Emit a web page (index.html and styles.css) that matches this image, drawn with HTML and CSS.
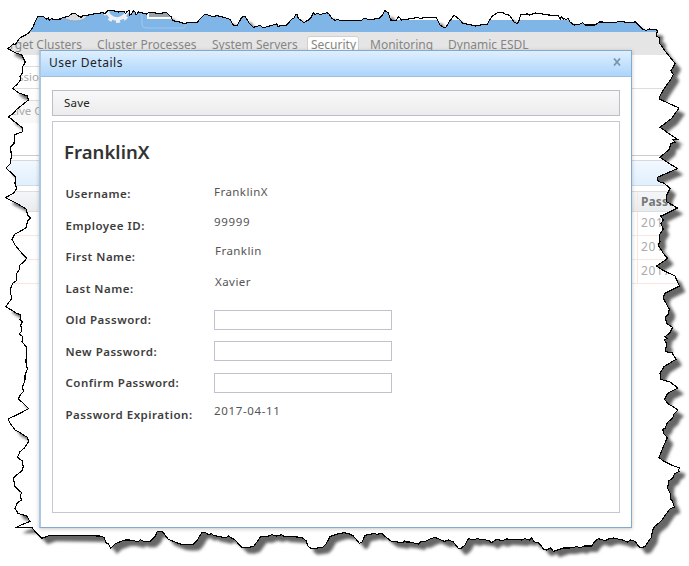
FILE: index.html
```html
<!DOCTYPE html>
<html lang="en">
<head>
<meta charset="utf-8">
<title>User Details</title>
<link rel="stylesheet" href="styles.css">
</head>
<body>
<div class="stage">
  <svg class="layer" viewBox="0 0 689 566">
    <defs>
      <path id="edge" transform="scale(.333333)" d="M24 146L40 132L46 134L58 115L85 100L97 85L108 60L113 50L130 50L140 57L145 54L148 61L154 56L160 58L182 57L188 52L205 50L214 42L225 40L232 46L243 52L250 46L262 46L275 43L308 38L314 41L322 33L340 32L355 36L372 34L377 41L381 34L387 32L389 46L394 42L400 33L404 34L408 45L416 36L440 42L446 37L476 40L500 38L515 52L517 62L535 65L550 70L592 66L612 45L620 44L640 50L650 47L665 50L690 58L700 75L712 76L725 52L735 49L748 70L760 82L780 76L787 82L795 82L830 72L834 79L846 76L860 75L875 58L882 54L887 44L892 45L895 55L912 68L925 60L934 51L940 38L944 43L955 40L959 44L982 38L988 43L995 55L1005 61L1012 58L1020 61L1085 61L1092 54L1110 60L1138 54L1146 46L1155 32L1165 38L1172 60L1188 61L1196 50L1205 60L1225 57L1255 52L1260 56L1275 52L1310 54L1320 75L1330 82L1338 81L1350 62L1362 46L1377 57L1389 70L1410 74L1427 78L1446 74L1462 72L1475 50L1492 38L1509 38L1515 42L1529 46L1542 66L1550 70L1555 68L1562 45L1577 44L1580 41L1589 45L1605 39L1625 41L1633 44L1660 46L1675 48L1681 57L1684 50L1690 58L1692 54L1697 58L1705 56L1710 66L1722 75L1737 74L1747 68L1757 75L1785 75L1799 66L1850 67L1857 63L1878 67L1907 66L1929 88L1939 91L1947 87L1967 88L1972 93L1969 108L1979 114L1979 130L1987 141L1997 155L2025 190L2018 205L2012 212L2020 224L2014 235L1989 272L1979 290L1980 298L2037 324L2030 334L2015 355L1980 382L2032 418L2018 418L2025 428L2012 430L2008 448L1980 472L2032 506L1972 532L1975 545L1990 548L2010 565L1999 588L2000 605L2032 624L1990 645L1982 648L1990 660L1983 671L1990 687L1978 705L1980 725L1974 735L1990 760L2003 775L1985 788L1969 798L1987 810L2025 828L2038 858L1994 880L1990 895L2008 928L2005 942L1996 952L2000 970L2018 982L2010 998L1995 1010L2001 1015L1993 1021L2000 1030L1996 1055L2016 1058L2028 1078L1992 1100L1980 1120L1982 1138L2010 1146L2034 1164L2003 1180L1994 1198L2003 1210L2034 1230L2022 1242L2018 1254L2002 1268L1996 1284L1988 1288L1992 1302L2002 1313L1990 1340L1977 1372L1988 1382L2012 1394L2028 1400L2040 1404L2034 1410L2037 1414L2024 1421L2018 1435L2006 1442L2003 1465L2011 1480L2011 1495L2018 1505L2023 1521L2008 1528L1985 1562L1963 1580L1958 1590L1954 1612L1935 1640L1920 1644L1905 1624L1892 1620L1883 1626L1864 1619L1840 1614L1826 1617L1815 1622L1795 1616L1785 1624L1775 1638L1752 1638L1743 1643L1730 1640L1710 1644L1690 1644L1672 1650L1660 1654L1652 1644L1639 1650L1630 1647L1618 1630L1602 1625L1595 1614L1588 1620L1575 1616L1565 1620L1520 1617L1506 1622L1490 1618L1475 1628L1465 1621L1430 1616L1425 1620L1405 1616L1395 1635L1382 1646L1375 1645L1360 1626L1346 1620L1333 1624L1305 1612L1292 1616L1272 1626L1264 1624L1255 1632L1230 1626L1218 1626L1214 1622L1208 1628L1175 1624L1162 1615L1145 1600L1130 1603L1124 1600L1095 1606L1086 1626L1078 1630L1070 1620L1060 1608L1045 1600L1038 1602L1035 1598L1020 1600L1000 1606L990 1610L978 1632L968 1642L935 1646L925 1640L918 1622L905 1612L850 1608L845 1604L830 1608L815 1604L800 1610L782 1610L762 1638L745 1643L725 1642L705 1620L685 1608L678 1614L640 1606L635 1601L625 1604L615 1597L605 1598L590 1623L580 1633L560 1634L540 1632L505 1618L488 1596L472 1594L465 1610L450 1624L430 1624L422 1619L414 1625L390 1620L375 1620L348 1630L332 1644L325 1631L319 1630L312 1612L300 1608L150 1606L125 1615L105 1594L95 1582L50 1582L60 1576L90 1564L80 1548L54 1540L45 1525L52 1508L65 1500L60 1488L65 1478L58 1472L45 1460L40 1435L50 1425L66 1412L70 1400L66 1382L52 1372L60 1355L72 1345L86 1325L82 1312L60 1298L45 1290L28 1266L25 1256L48 1246L86 1226L65 1205L55 1198L60 1186L70 1175L68 1160L75 1140L75 1125L82 1108L78 1088L79 1040L66 1026L68 1010L58 1002L66 993L62 975L67 965L60 958L62 945L50 940L18 920L35 895L30 870L38 850L50 842L50 820L58 808L60 795L72 785L80 775L66 760L45 735L36 718L45 702L68 690L80 682L82 662L92 655L82 645L80 628L54 612L22 596L18 592L40 580L50 566L45 550L46 530L35 520L18 504L30 492L34 470L32 440L42 430L44 405L50 402L68 395L66 382L50 370L25 350L40 340L50 328L85 300L82 288L55 278L38 265L50 254L62 240L60 230L68 218L68 200L76 186L65 165L45 158Z"/>
      <clipPath id="paper"><use href="#edge"/></clipPath>
      <filter id="soft" x="-5%" y="-5%" width="110%" height="110%"><feGaussianBlur stdDeviation="1.5"/></filter>
    </defs>
    <use href="#edge" x="6" y="6" class="paper-shadow"/>
    <use href="#edge" class="paper-fill"/>
  </svg>

  <div class="page">
    <div class="banner">
      <svg class="banner-icons" width="160" height="32" viewBox="50 0 160 32">
        <ellipse cx="75" cy="15.500" rx="12" ry="5.500" fill="#d5dce3" stroke="#88a5bf"/>
        <circle cx="117" cy="9" r="10" fill="none" stroke="#eef1f4" stroke-width="3.500"/>
        <circle cx="117" cy="9" r="12.500" fill="none" stroke="#eef1f4" stroke-width="3" stroke-dasharray="4 4.200"/>
        <path d="M142 8V24Q142 28 146 28H182Q186 28 186 23" fill="none" stroke="#9dc8f2"/>
        <path d="M148 8H172V18H148Z" fill="#9ba2a8" stroke="#fff" stroke-width="2"/>
      </svg>
    </div>
    <div class="tabs">
      <span class="tab first">Target Clusters</span>
      <span class="tab processes">Cluster Processes</span>
      <span class="tab servers">System Servers</span>
      <span class="tab active">Security</span>
      <span class="tab monitoring">Monitoring</span>
      <span class="tab">Dynamic ESDL</span>
    </div>
    <div class="subtabs">Permissions</div>
    <div class="actions">Active C</div>
    <div class="blank"></div>
    <div class="bluebar"></div>
    <div class="grid-row grid-head"><span>Password</span></div>
    <div class="grid-row"><span>2017</span></div>
    <div class="grid-row"><span>2017</span></div>
    <div class="grid-row"><span>2017</span></div>
  </div>

  <svg class="layer" viewBox="0 0 689 566"><use href="#edge" class="outline"/></svg>

  <div class="dialog">
    <div class="dialog-title"><span>User Details</span>
      <svg class="close" width="8" height="8" viewBox="0 0 8 8"><path d="M1 .5L7 7.5M7 .5L1 7.5"/></svg>
    </div>
    <div class="dialog-body">
      <div class="toolbar">Save</div>
      <div class="panel">
        <h2>FranklinX</h2>
        <div class="fields">
          <label>Username:</label><span class="value">FranklinX</span>
          <label>Employee ID:</label><span class="value raised">99999</span>
          <label>First Name:</label><span class="value high">Franklin</span>
          <label>Last Name:</label><span class="value high">Xavier</span>
          <label>Old Password:</label><input type="password">
          <label>New Password:</label><input type="password">
          <label>Confirm Password:</label><input type="password">
          <label>Password Expiration:</label><span class="value raised">2017-04-11</span>
        </div>
      </div>
    </div>
  </div>
</div>
</body>
</html>
```
FILE: styles.css
```css
* { box-sizing: border-box; }
body {
  margin: 0;
  background: #fff;
  font-family: "Noto Sans", "Open Sans", sans-serif;
  font-size: 11.5px;
  color: #444;
}
.stage { position: relative; width: 689px; height: 566px; overflow: hidden; }
.layer { position: absolute; inset: 0; width: 689px; height: 566px; }
.paper-shadow { fill: #666; filter: url(#soft); }
.paper-fill { fill: #fff; }
.outline { fill: none; stroke: #000; stroke-width: 3.3; shape-rendering: crispEdges; }

.page { position: relative; height: 566px; clip-path: url(#paper); color: #aaa; }
.banner {
  height: 32px;
  padding-left: 50px;
  background: linear-gradient(to right, #80b5e8 390px, transparent 390px),
    linear-gradient(#fff 20px, #80b5e8 20px);
}
.banner-icons { display: block; }
.tabs {
  height: 23px;
  display: flex;
  align-items: flex-start;
  padding: 4px 0 0 2px;
  background: #e5e5e5;
  color: #858585;
  font-size: 12px;
  line-height: 17px;
  white-space: nowrap;
}
.tab { flex: none; }
.tab.first { width: 95px; direction: rtl; padding-right: 15px; }
.tab.processes { width: 115px; letter-spacing: .05px; }
.tab.servers { width: 95px; }
.tab.active {
  width: 52px;
  margin-right: 11px;
  padding: 0 3px;
  background: #fff;
  border: 1px solid #d0d0d0;
  border-radius: 3px;
  line-height: 15px;
}
.tab.monitoring { width: 78px; }
.subtabs {
  height: 34px;
  padding-top: 14px;
  border-bottom: 1px solid #ddd;
  text-indent: -14px;
  background: linear-gradient(#fff 11px, #ddd 11px, #ddd 12px, #fff 12px) no-repeat 0 0 / 40px 33px;
}
.actions {
  height: 35px;
  padding-top: 14px;
  text-indent: -1px;
  background: linear-gradient(#fff 11px, #ddd 11px, #ddd 12px, #f8f8f8 12px) no-repeat 0 0 / 40px 34px;
}
.blank { height: 32px; border-bottom: 1px solid #ccc; }
.bluebar { height: 26px; margin: 4px 0 5px; background: linear-gradient(#f2f8fe, #e0f0fe); border: solid #d4d9e2; border-width: 1px 0; }
.grid-row { height: 24px; padding-left: 637px; border-bottom: 1px solid #f8e6df; font-size: 12px; line-height: 21px; letter-spacing: .6px; }
.grid-row span { display: block; height: 100%; border-left: 1px solid #f8e6df; padding-left: 3px; }
.grid-head { height: 21px; background: linear-gradient(#f4f6f8, #e9ecef); color: #777; font-weight: 700; border: solid #ddd; border-width: 1px 0; line-height: 19px; letter-spacing: .1px; }

.dialog {
  position: absolute;
  left: 39px;
  top: 50px;
  width: 593px;
  height: 478px;
  display: flex;
  flex-direction: column;
  background: #fff;
  border: 1px solid #83a9cc;
  border-left: 2px solid #acc7e2;
  box-shadow: 0 1px 4px rgba(0, 0, 0, .22);
}
.dialog-title {
  height: 26px;
  display: flex;
  align-items: center;
  justify-content: space-between;
  padding: 0 10px 2px 8px;
  border-bottom: 1px solid #a6bdd6;
  background: linear-gradient(#deefff, #add5fc);
  color: #222;
  font-size: 12px;
  letter-spacing: .5px;
}
.close { fill: none; stroke: #7c95ad; stroke-width: 1.8; margin-bottom: 2px; }
.dialog-body { flex: 1; display: flex; flex-direction: column; gap: 5px; padding: 13px 11px 14px 11px; }
.toolbar {
  height: 26px;
  padding-left: 11px;
  border: 1px solid #bbbdc9;
  background: linear-gradient(#f8f8f8, #ececec);
  color: #222;
  line-height: 24px;
  letter-spacing: .2px;
}
.panel { flex: 1; border: 1px solid #c3c8d2; padding: 16px 11px; }
h2 { margin: 0 0 13px; font-size: 18.5px; line-height: 27px; font-weight: 600; letter-spacing: .05px; color: #333; }
.fields { display: grid; grid-template-columns: 150px 178px; grid-auto-rows: 31.5px; align-items: center; }
.fields label { font-weight: 600; padding-left: 1.5px; letter-spacing: .5px; color: #3d3d3d; white-space: nowrap; }
.value { letter-spacing: .45px; padding-bottom: 4px; color: #555; }
.value.raised { padding-bottom: 7px; letter-spacing: .65px; }
.value.high { padding-bottom: 13px; padding-left: 1px; }
.fields input { width: 178px; height: 20px; margin: 0; border: 1px solid #bfc3d0; background: #fff; }
```
